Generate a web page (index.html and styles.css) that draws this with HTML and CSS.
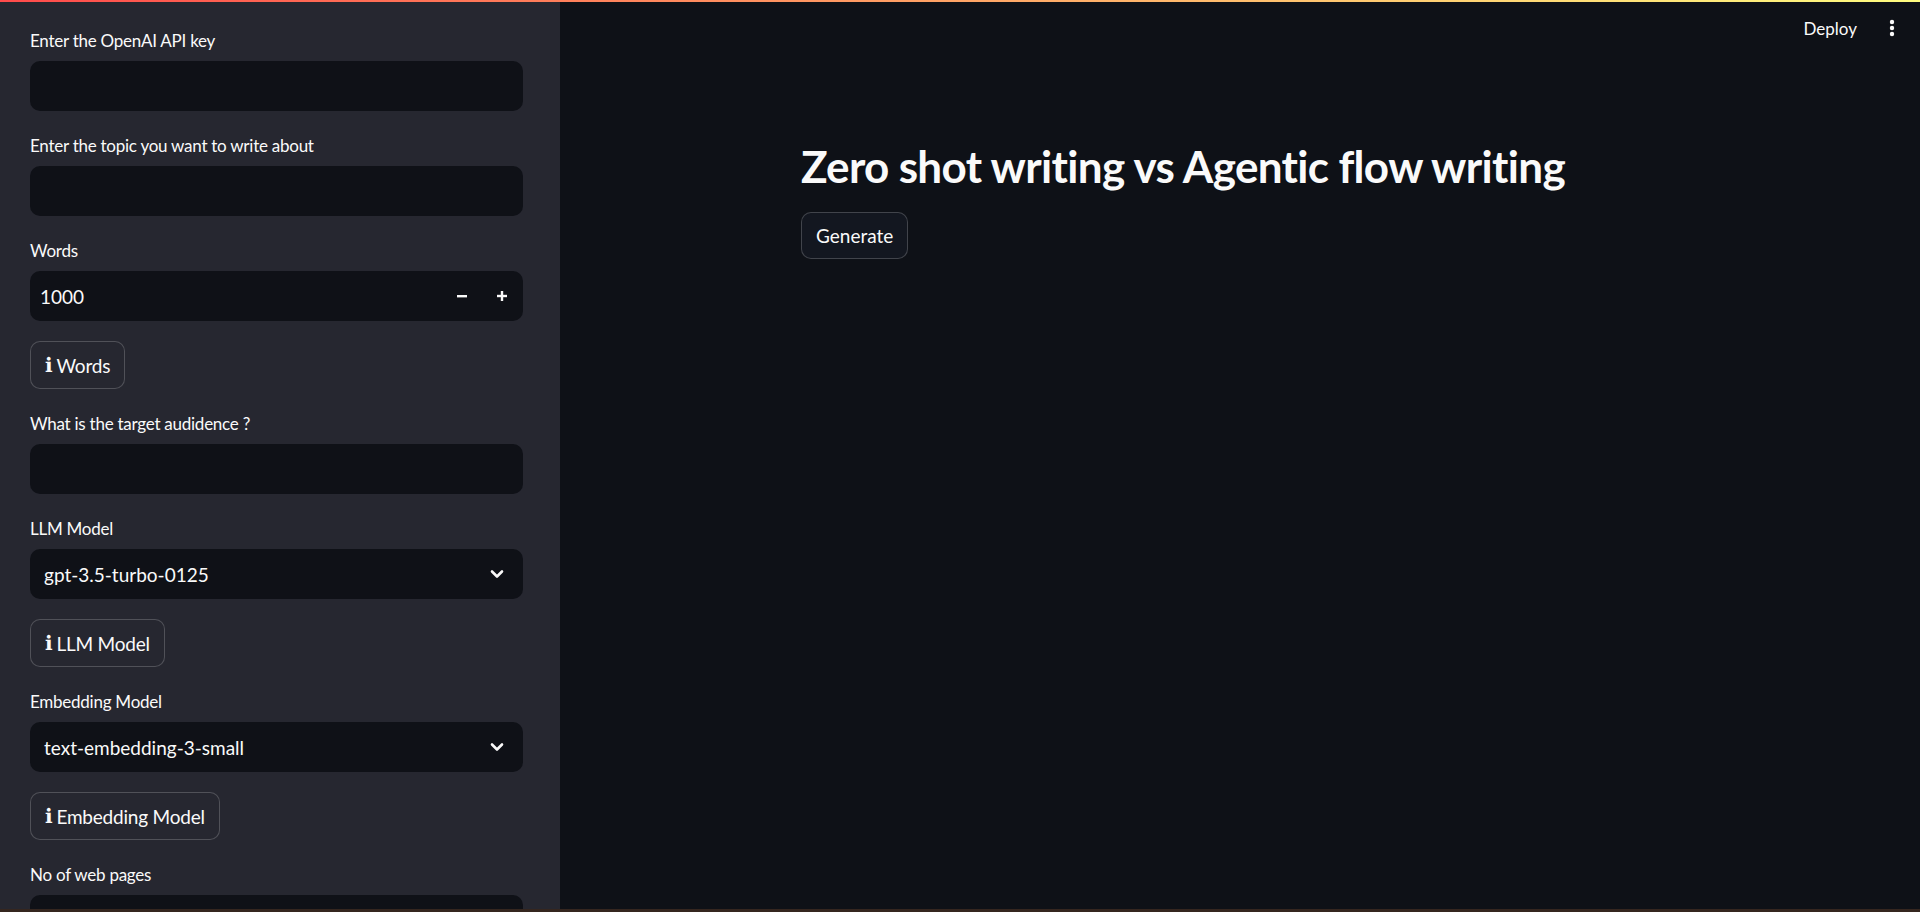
FILE: index.html
```html
<!DOCTYPE html>
<html lang="en">
<head>
<meta charset="utf-8">
<title>Zero shot writing vs Agentic flow writing</title>
<link rel="stylesheet" href="styles.css">
</head>
<body>
<div class="app">
  <div class="decoration"></div>
  <div class="frame">
    <aside class="sidebar">
      <div class="widget">
        <label class="wlabel">Enter the OpenAI API key</label>
        <div class="field"></div>
      </div>
      <div class="widget">
        <label class="wlabel">Enter the topic you want to write about</label>
        <div class="field"></div>
      </div>
      <div class="widget">
        <label class="wlabel">Words</label>
        <div class="field number">
          <span class="value">1000</span>
          <span class="steps">
            <span class="step"><svg width="12" height="12" viewBox="0 0 12 12"><rect x="1" y="5" width="10" height="2.4" fill="#fafafa"/></svg></span>
            <span class="step"><svg width="12" height="12" viewBox="0 0 12 12"><rect x="1" y="4.8" width="10" height="2.4" fill="#fafafa"/><rect x="4.8" y="1" width="2.4" height="10" fill="#fafafa"/></svg></span>
          </span>
        </div>
      </div>
      <div class="widget">
        <button class="btn side"><span class="info">ℹ</span>Words</button>
      </div>
      <div class="widget">
        <label class="wlabel">What is the target audidence ?</label>
        <div class="field"></div>
      </div>
      <div class="widget">
        <label class="wlabel">LLM Model</label>
        <div class="field select">
          <span class="value">gpt-3.5-turbo-0125</span>
          <svg class="chev" width="14" height="10" viewBox="0 0 14 10"><path d="M2 2.5 L7 7.5 L12 2.5" fill="none" stroke="#fafafa" stroke-width="2.6" stroke-linecap="round" stroke-linejoin="round"/></svg>
        </div>
      </div>
      <div class="widget">
        <button class="btn side"><span class="info">ℹ</span>LLM Model</button>
      </div>
      <div class="widget">
        <label class="wlabel">Embedding Model</label>
        <div class="field select">
          <span class="value">text-embedding-3-small</span>
          <svg class="chev" width="14" height="10" viewBox="0 0 14 10"><path d="M2 2.5 L7 7.5 L12 2.5" fill="none" stroke="#fafafa" stroke-width="2.6" stroke-linecap="round" stroke-linejoin="round"/></svg>
        </div>
      </div>
      <div class="widget">
        <button class="btn side"><span class="info">ℹ</span>Embedding Model</button>
      </div>
      <div class="widget">
        <label class="wlabel">No of web pages</label>
        <div class="field"></div>
      </div>
    </aside>
    <main class="main">
      <header class="toolbar">
        <span class="deploy">Deploy</span>
        <svg class="menu" width="6" height="18" viewBox="0 0 6 18"><circle cx="3" cy="3" r="2.2" fill="#fafafa"/><circle cx="3" cy="9" r="2.2" fill="#fafafa"/><circle cx="3" cy="15" r="2.2" fill="#fafafa"/></svg>
      </header>
      <section class="block">
        <h1 class="title">Zero shot writing vs Agentic flow writing</h1>
        <div><button class="btn main-btn">Generate</button></div>
      </section>
    </main>
  </div>
  <div class="bottomline"></div>
</div>
</body>
</html>
```
FILE: styles.css
```css
* { box-sizing: border-box; }
html, body {
  margin: 0;
  padding: 0;
  width: 1920px;
  height: 912px;
  overflow: hidden;
  background: #0e1117;
  color: #fafafa;
  font-family: Lato, "Noto Sans", "Liberation Sans", sans-serif;
}
.app {
  display: flex;
  flex-direction: column;
  height: 912px;
}
.decoration {
  height: 2px;
  flex: none;
  background: linear-gradient(90deg, #ff4b4b, #fffd80);
}
.frame {
  flex: 1;
  display: flex;
  min-height: 0;
}
.bottomline {
  height: 3px;
  flex: none;
  background: #35261f;
}
.sidebar {
  width: 560px;
  flex: none;
  background: #262730;
  padding: 24px 37px 0 30px;
  display: flex;
  flex-direction: column;
  gap: 20px;
  overflow: hidden;
}
.widget {
  display: flex;
  flex-direction: column;
  flex: none;
}
.wlabel {
  height: 30px;
  line-height: 30px;
  margin-bottom: 5px;
  font-size: 17px;
  letter-spacing: -0.25px;
}
.field {
  height: 50px;
  background: #0f1117;
  border-radius: 10px;
  display: flex;
  align-items: center;
  font-size: 19px;
  flex: none;
}
.field .value { padding-left: 10px; }
.field.select .value { padding-left: 14px; }
.number { justify-content: space-between; }
.steps { display: flex; align-items: center; height: 100%; padding-right: 1px; }
.step {
  width: 40px;
  height: 100%;
  display: flex;
  align-items: center;
  justify-content: center;
}
.select { justify-content: space-between; }
.chev { margin-right: 19px; }
.btn {
  font-family: inherit;
  color: #fafafa;
  font-size: 19px;
  height: 48px;
  border-radius: 10px;
  border: 1px solid rgba(250, 250, 250, 0.2);
  padding: 0 15px;
  display: inline-flex;
  align-items: center;
  cursor: pointer;
}
.btn.side {
  background: #262730;
  align-self: flex-start;
  padding: 0 14px 0 14px;
  letter-spacing: -0.2px;
}
.info {
  font-family: "DejaVu Sans", sans-serif;
  font-weight: 700;
  font-size: 20px;
  margin-right: 4px;
}
.main {
  flex: 1;
  display: flex;
  flex-direction: column;
  min-width: 0;
}
.toolbar {
  height: 52px;
  display: flex;
  align-items: center;
  justify-content: flex-end;
  padding-right: 25px;
  gap: 32px;
  flex: none;
}
.deploy { font-size: 17px; }
.menu { display: block; }
.block {
  width: 878px;
  margin: 0 auto;
  padding-top: 86px;
  display: flex;
  flex-direction: column;
  gap: 19px;
}
.title {
  margin: 0;
  font-size: 44px;
  line-height: 52.8px;
  font-weight: 700;
  letter-spacing: -0.65px;
}
.main-btn {
  background: #131720;
  height: 47px;
  padding: 0 14px;
}
```
